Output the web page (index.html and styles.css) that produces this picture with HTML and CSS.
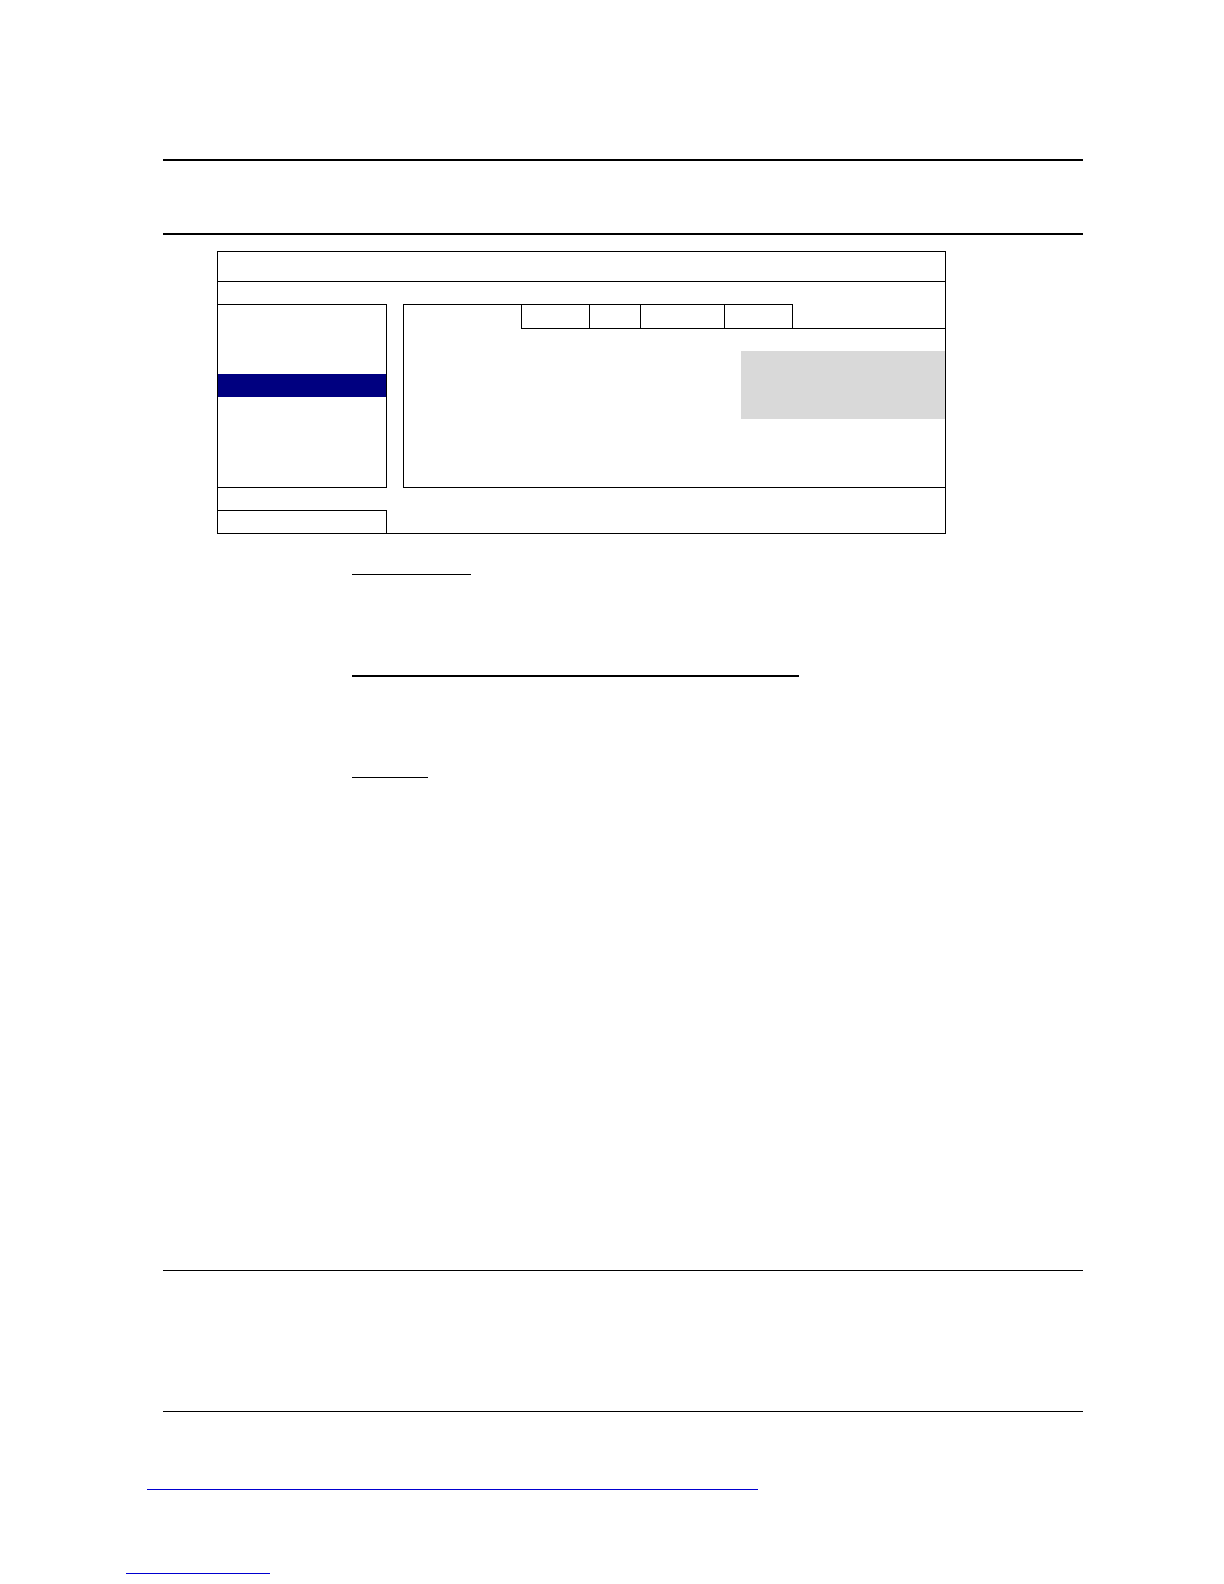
FILE: index.html
```html
<!DOCTYPE html>
<html lang="en">
<head>
<meta charset="utf-8">
<title>Page</title>
<link rel="stylesheet" href="styles.css">
</head>
<body>
<div class="page">
  <div class="rule rule-thick rule-top1"></div>
  <div class="rule rule-thick rule-top2"></div>

  <div class="dialog">
    <div class="dlg-title"></div>
    <div class="dlg-sub"></div>
    <div class="dlg-main">
      <div class="side">
        <div class="side-item"></div>
        <div class="side-item"></div>
        <div class="side-item"></div>
        <div class="side-item selected"></div>
      </div>
      <div class="split"></div>
      <div class="content">
        <div class="tabs">
          <div class="tab-spacer"></div>
          <div class="tab tab-a"></div>
          <div class="tab tab-b"></div>
          <div class="tab tab-c"></div>
          <div class="tab tab-d"></div>
          <div class="tab-fill"></div>
        </div>
        <div class="content-body">
          <div class="grey-panel"></div>
        </div>
      </div>
    </div>
    <div class="dlg-foot"></div>
    <div class="dlg-status">
      <div class="status-box"></div>
    </div>
  </div>

  <div class="uline uline-1"></div>
  <div class="uline uline-2"></div>
  <div class="uline uline-3"></div>

  <div class="rule rule-thin rule-bot1"></div>
  <div class="rule rule-thin rule-bot2"></div>

  <div class="link-line link-1"></div>
  <div class="link-line link-2"></div>
</div>
</body>
</html>
```

FILE: styles.css
```css
html, body {
  margin: 0;
  padding: 0;
  background: #ffffff;
  font-family: "Liberation Sans", Arial, sans-serif;
}

.page {
  width: 1224px;
  height: 1584px;
  box-sizing: border-box;
  padding-top: 159px;
  display: flex;
  flex-direction: column;
  align-items: flex-start;
}

.rule {
  background: #000;
  margin-left: 163px;
  width: 920px;
}
.rule-thick { height: 2px; }
.rule-thin { height: 1px; }
.rule-top2 { margin-top: 72px; }
.rule-bot1 { margin-top: 492px; }
.rule-bot2 { margin-top: 140px; }

/* dialog mock-up */
.dialog {
  margin-top: 16px;
  margin-left: 217px;
  width: 729px;
  height: 283px;
  box-sizing: border-box;
  border: 1px solid #000;
  display: flex;
  flex-direction: column;
}
.dlg-title {
  height: 30px;
  box-sizing: border-box;
  border-bottom: 1px solid #000;
}
.dlg-sub { height: 22px; }
.dlg-main {
  height: 184px;
  display: flex;
}
.side {
  width: 169px;
  box-sizing: border-box;
  border-top: 1px solid #000;
  border-right: 1px solid #000;
  border-bottom: 1px solid #000;
  display: flex;
  flex-direction: column;
}
.side-item { height: 23px; flex: none; }
.side-item.selected { background: #000080; }
.split { width: 16px; flex: none; }
.content {
  flex: 1;
  box-sizing: border-box;
  border-left: 1px solid #000;
  border-bottom: 1px solid #000;
  display: flex;
  flex-direction: column;
}
.tabs {
  height: 25px;
  display: flex;
  flex: none;
}
.tabs > div {
  height: 25px;
  box-sizing: border-box;
  flex: none;
}
.tab-spacer {
  width: 117px;
  border-top: 1px solid #000;
}
.tab {
  border-top: 1px solid #000;
  border-left: 1px solid #000;
  border-bottom: 1px solid #000;
}
.tab-a { width: 68px; }
.tab-b { width: 51px; }
.tab-c { width: 84px; }
.tab-d { width: 68px; }
.tabs > .tab-fill {
  flex: 1;
  border-left: 1px solid #000;
  border-bottom: 1px solid #000;
}
.content-body {
  flex: 1;
  padding-top: 22px;
  display: flex;
  flex-direction: column;
  align-items: flex-end;
}
.grey-panel {
  width: 204px;
  height: 68px;
  background: #d9d9d9;
}
.dlg-foot { height: 22px; }
.dlg-status { height: 23px; }
.status-box {
  width: 169px;
  height: 23px;
  box-sizing: border-box;
  border-top: 1px solid #000;
  border-right: 1px solid #000;
}

/* underlined headings (text is blank in the source) */
.uline {
  margin-left: 352px;
  background: #000;
}
.uline-1 { margin-top: 40px; width: 119px; height: 1px; }
.uline-2 { margin-top: 100px; width: 447px; height: 2px; }
.uline-3 { margin-top: 100px; width: 76px; height: 1px; }

/* hyperlink underlines */
.link-line {
  height: 1px;
  background: #0000d0;
}
.link-1 { margin-top: 77px; margin-left: 147px; width: 611px; }
.link-2 { margin-top: 83px; margin-left: 126px; width: 144px; }
```
